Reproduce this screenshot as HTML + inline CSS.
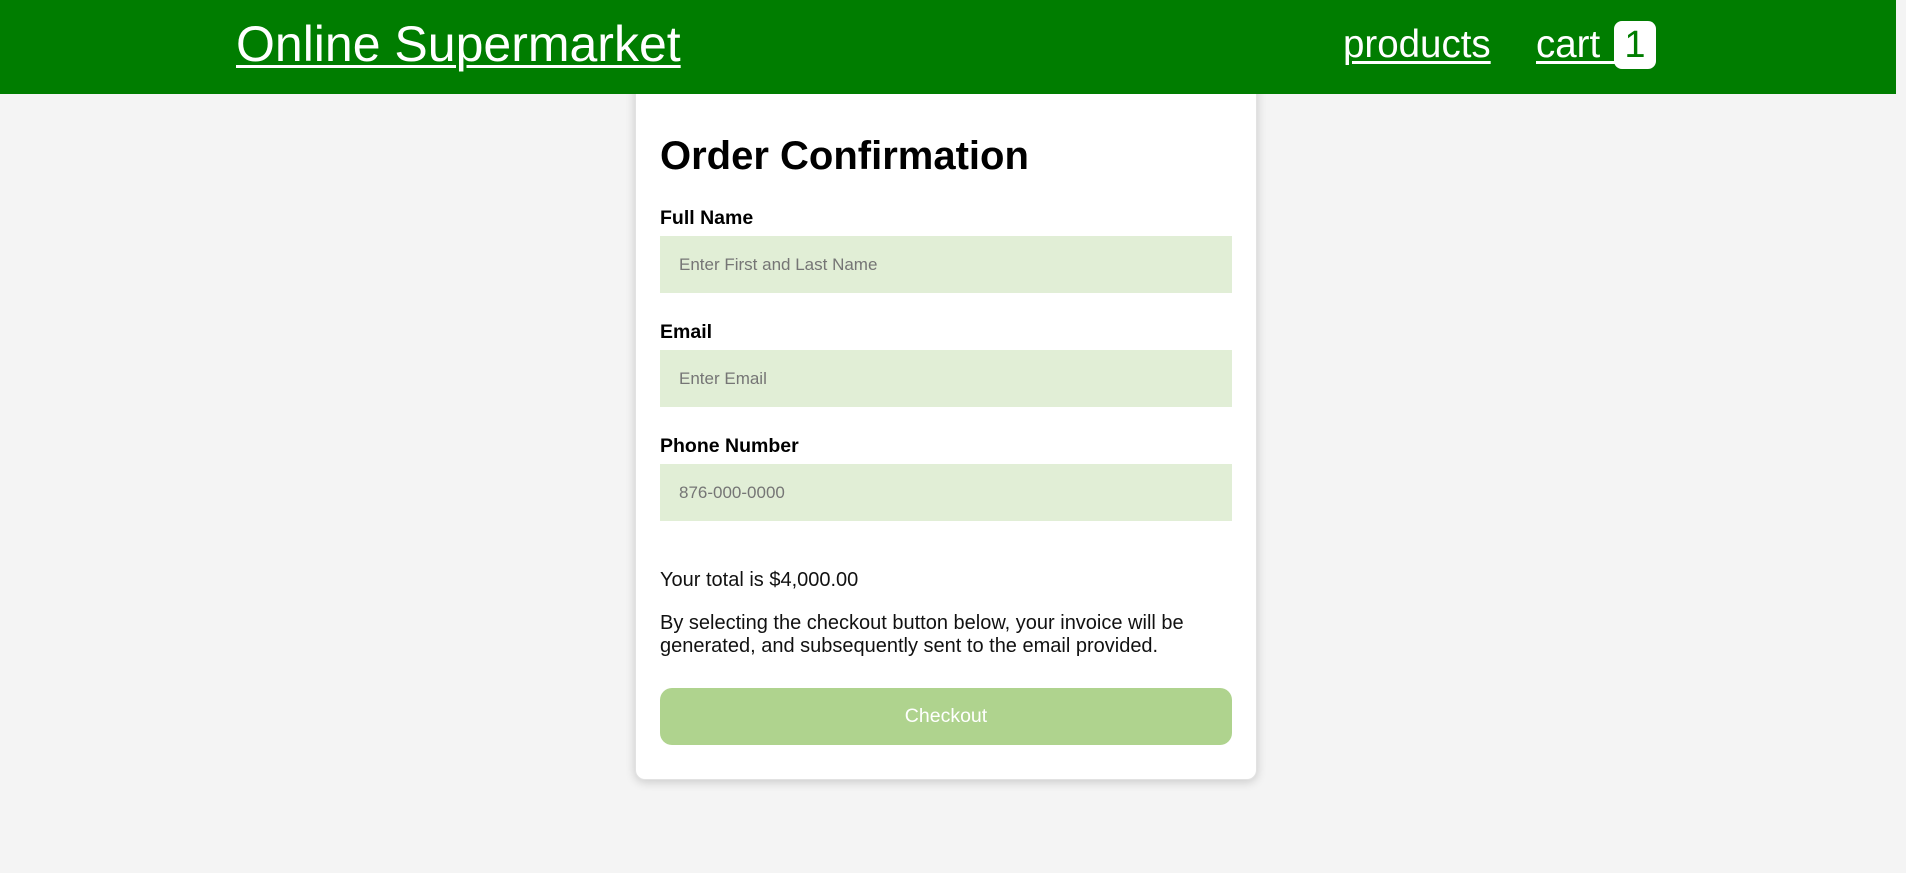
<!DOCTYPE html>
<html><head><style>
html,body{margin:0;padding:0;background:#f4f4f4;font-family:"Liberation Sans",Arial,sans-serif;width:1906px;height:873px;overflow:hidden;position:relative}
.hdr{position:absolute;left:0;top:0;width:1896px;height:94px;background:#007d00;z-index:2}
.hdr a{position:absolute;color:#fff;text-decoration:underline;text-decoration-thickness:3px;text-underline-offset:4px}
.logo{left:236px;top:15px;font-size:50px}
.prod{left:1343px;top:23px;font-size:38.5px}
.cart{left:1536px;top:23px;font-size:38.5px}
.badge{position:absolute;left:1614px;top:21px;width:42px;height:48px;background:#fff;border-radius:8px;color:#007d00;font-size:38px;text-align:center;line-height:48px}
.card{position:absolute;left:635px;top:60px;width:622px;height:720px;background:#fff;border-radius:10px;box-shadow:0 2px 10px rgba(0,0,0,.18);border:1px solid #e2e2e2;box-sizing:border-box}
.abs{position:absolute;left:660px}
h1{margin:0;font-size:40px;font-weight:bold;top:134px;color:#000}
.lbl{font-weight:bold;font-size:19.5px;color:#000}
.inp{width:572px;height:57px;background:#e1eed6;color:#757575;font-size:17px;box-sizing:border-box;padding-left:19px;line-height:57px}
.t{font-size:20px;color:#111}
.btn{width:572px;height:57px;background:#afd38e;border-radius:12px;color:#fff;font-size:19.5px;text-align:center;line-height:57px}
</style></head><body>
<div class="hdr">
<a class="logo">Online Supermarket</a>
<a class="prod">products</a>
<a class="cart">cart&nbsp;&nbsp;</a>
<div class="badge">1</div>
</div>
<div class="card"></div>
<h1 class="abs">Order Confirmation</h1>
<div class="abs lbl" style="top:207px">Full Name</div>
<div class="abs inp" style="top:236px">Enter First and Last Name</div>
<div class="abs lbl" style="top:321px">Email</div>
<div class="abs inp" style="top:350px">Enter Email</div>
<div class="abs lbl" style="top:435px">Phone Number</div>
<div class="abs inp" style="top:464px">876-000-0000</div>
<div class="abs t" style="top:569px">Your total is $4,000.00</div>
<div class="abs t" style="top:612px;width:572px;line-height:23px">By selecting the checkout button below, your invoice will be generated, and subsequently sent to the email provided.</div>
<div class="abs btn" style="top:688px">Checkout</div>
</body></html>
